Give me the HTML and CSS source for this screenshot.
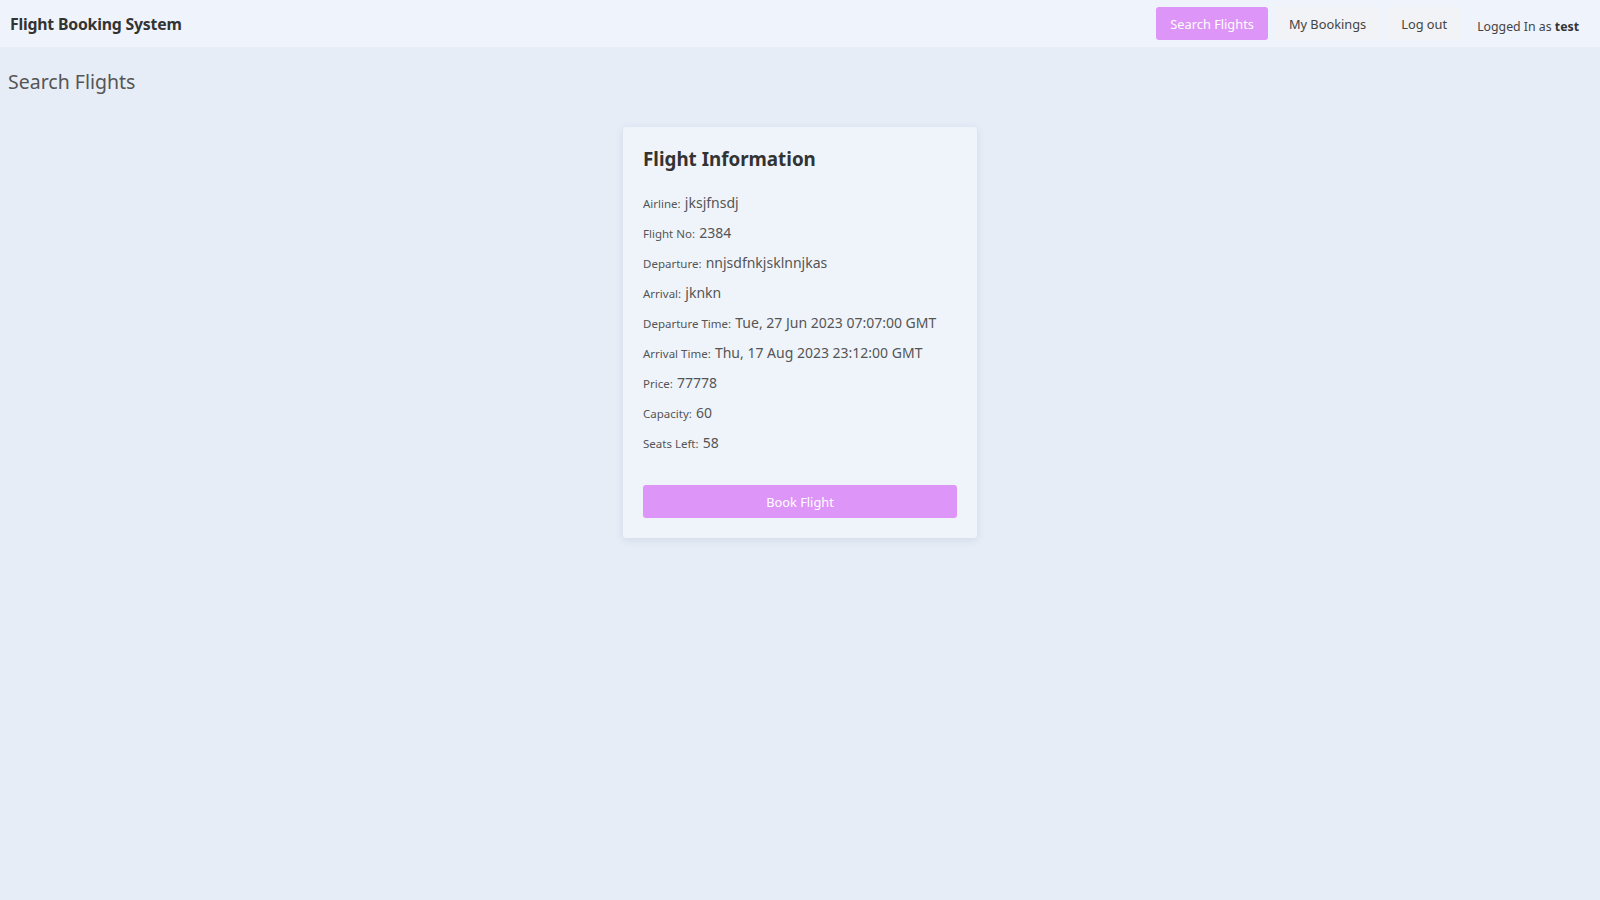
FILE: index.html
```html
<!DOCTYPE html>
<html>
<head>
<meta charset="utf-8">
<link rel="stylesheet" href="styles.css">
</head>
<body>
<nav class="navbar">
  <div class="brand">Flight Booking System</div>
  <div class="nav-actions">
    <button class="nav-btn active">Search Flights</button>
    <button class="nav-btn">My Bookings</button>
    <button class="nav-btn">Log out</button>
    <span class="user">Logged In as <b>test</b></span>
  </div>
</nav>
<main class="page">
  <h1 class="page-title">Search Flights</h1>
  <div class="card-wrap">
    <section class="card">
      <h2 class="card-title">Flight Information</h2>
      <p class="row"><span class="label">Airline:</span> <span class="value">jksjfnsdj</span></p>
      <p class="row"><span class="label">Flight No:</span> <span class="value">2384</span></p>
      <p class="row"><span class="label">Departure:</span> <span class="value">nnjsdfnkjsklnnjkas</span></p>
      <p class="row"><span class="label">Arrival:</span> <span class="value">jknkn</span></p>
      <p class="row"><span class="label">Departure Time:</span> <span class="value">Tue, 27 Jun 2023 07:07:00 GMT</span></p>
      <p class="row"><span class="label">Arrival Time:</span> <span class="value">Thu, 17 Aug 2023 23:12:00 GMT</span></p>
      <p class="row"><span class="label">Price:</span> <span class="value">77778</span></p>
      <p class="row"><span class="label">Capacity:</span> <span class="value">60</span></p>
      <p class="row"><span class="label">Seats Left:</span> <span class="value">58</span></p>
      <button class="book-btn">Book Flight</button>
    </section>
  </div>
</main>
</body>
</html>
```
FILE: styles.css
```css
* { box-sizing: border-box; }
html, body { margin: 0; padding: 0; }
body {
  font-family: "Noto Sans", "Open Sans", sans-serif;
  background: #e6edf7;
  color: #444;
  min-height: 900px;
}
.navbar {
  height: 47px;
  background: #eff4fc;
  display: flex;
  align-items: center;
  justify-content: space-between;
  padding: 0 21px 0 10px;
}
.brand {
  font-size: 15.8px;
  font-weight: 700;
  color: #333;
  letter-spacing: -0.2px;
}
.nav-actions {
  display: flex;
  align-items: center;
  gap: 7px;
}
.nav-btn {
  font-family: inherit;
  font-size: 12.8px;
  height: 33px;
  padding: 0 14px;
  border: none;
  border-radius: 3px;
  background: #f1f3f6;
  color: #444;
}
.nav-btn.active {
  background: #dd95f7;
  color: #fff;
}
.user {
  margin-left: 9px;
  font-size: 12.3px;
  color: #444;
  padding-top: 6px;
}
.user b { color: #333; }
.page { padding: 0 8px; }
.page-title {
  margin: 21px 0 0;
  font-size: 19.5px;
  font-weight: 400;
  color: #555;
  line-height: 28px;
}
.card-wrap {
  display: flex;
  justify-content: center;
  margin-top: 31px;
}
.card {
  width: 354px;
  background: #eff4fb;
  border-radius: 3px;
  box-shadow: 0 2px 8px rgba(60, 80, 120, 0.12);
  padding: 18px 20px 20px;
}
.card-title {
  margin: 0 0 16px;
  font-size: 18.8px;
  font-weight: 700;
  color: #333;
  line-height: 28px;
}
.row {
  margin: 0;
  height: 30px;
  line-height: 26px;
  color: #555;
}
.label { font-size: 11.5px; }
.value { font-size: 14px; }
.book-btn {
  display: block;
  width: 100%;
  height: 33px;
  margin-top: 26px;
  border: none;
  border-radius: 3px;
  background: #dd95f7;
  color: #fff;
  font-family: inherit;
  font-size: 12.8px;
}
```
